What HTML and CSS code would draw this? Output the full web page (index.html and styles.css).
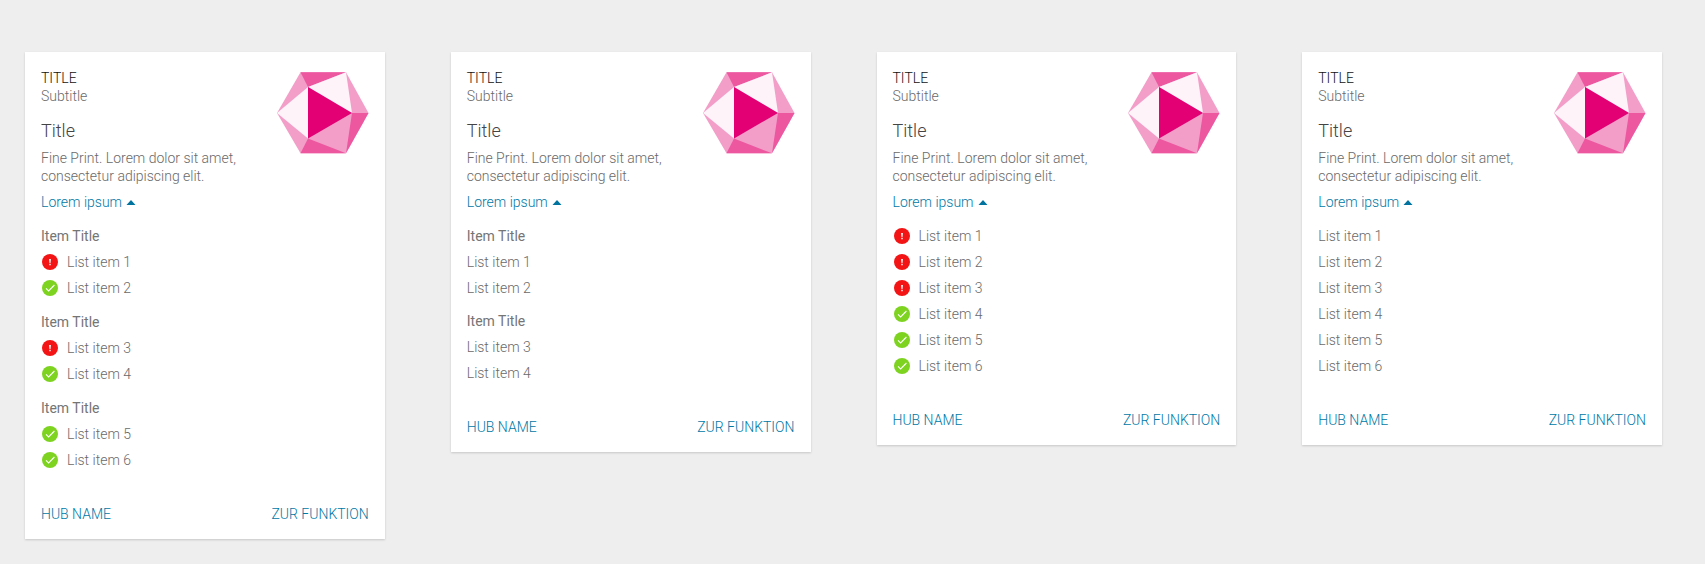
FILE: index.html
```html
<!DOCTYPE html>
<html lang="de">
<head>
<meta charset="utf-8">
<title>Cards</title>
<link rel="stylesheet" href="styles.css">
</head>
<body>
<svg class="sprite" aria-hidden="true">
  <symbol id="gem" viewBox="0 0 92 82">
    <polygon fill="#f29ec8" points="0,41 23.5,0.3 69,0.3 91.5,41 69,81.3 23.5,81.3"/>
    <polygon fill="#ec57a0" points="23.5,0.3 69,0.3 31,15"/>
    <polygon fill="#fef3f9" points="69,0.3 75,41 31,15"/>
    <polygon fill="#fef3f9" points="0,41 31,15 31,66.5"/>
    <polygon fill="#ec57a0" points="75,41 91.5,41 69,81.3"/>
    <polygon fill="#ec57a0" points="31,66.5 69,81.3 23.5,81.3"/>
    <polygon fill="#e20074" points="31,15 75,41 31,66.5"/>
  </symbol>
  <symbol id="alert" viewBox="0 0 16 16">
    <circle cx="8" cy="8" r="8" fill="#f31515"/>
    <path fill="#fff" d="M7.1 5h1.8l-.4 4h-1zM7.3 9.8h1.4v1.4H7.3z"/>
  </symbol>
  <symbol id="check" viewBox="0 0 16 16">
    <circle cx="8" cy="8" r="8" fill="#7ed321"/>
    <path fill="none" stroke="#fff" stroke-width="1.1" d="M4 8.4l2.6 2.5L12.4 5"/>
  </symbol>
</svg>
<main class="cards">
  <article class="card">
    <header class="card-head">
      <div class="card-intro">
        <h2 class="overline">TITLE</h2>
        <p class="subtitle">Subtitle</p>
        <h3 class="headline">Title</h3>
        <p class="fine-print">Fine Print. Lorem dolor sit amet, consectetur adipiscing elit.</p>
        <button class="toggle" type="button" aria-expanded="true">Lorem ipsum<svg class="caret" viewBox="0 0 10 5" aria-hidden="true"><path d="M.5 5L5 0l4.500 5z"/></svg></button>
      </div>
      <svg class="gem" aria-hidden="true"><use href="#gem"/></svg>
    </header>
    <div class="groups">
      <section class="group">
        <h4 class="group-title">Item Title</h4>
        <ul class="list">
          <li class="item"><svg class="status" role="img" aria-label="Fehler"><use href="#alert"/></svg>List item 1</li>
          <li class="item"><svg class="status" role="img" aria-label="OK"><use href="#check"/></svg>List item 2</li>
        </ul>
      </section>
      <section class="group">
        <h4 class="group-title">Item Title</h4>
        <ul class="list">
          <li class="item"><svg class="status" role="img" aria-label="Fehler"><use href="#alert"/></svg>List item 3</li>
          <li class="item"><svg class="status" role="img" aria-label="OK"><use href="#check"/></svg>List item 4</li>
        </ul>
      </section>
      <section class="group">
        <h4 class="group-title">Item Title</h4>
        <ul class="list">
          <li class="item"><svg class="status" role="img" aria-label="OK"><use href="#check"/></svg>List item 5</li>
          <li class="item"><svg class="status" role="img" aria-label="OK"><use href="#check"/></svg>List item 6</li>
        </ul>
      </section>
    </div>
    <footer class="card-foot"><a class="link" href="#hub">HUB NAME</a><a class="link" href="#funktion">ZUR FUNKTION</a></footer>
  </article>

  <article class="card">
    <header class="card-head">
      <div class="card-intro">
        <h2 class="overline">TITLE</h2>
        <p class="subtitle">Subtitle</p>
        <h3 class="headline">Title</h3>
        <p class="fine-print">Fine Print. Lorem dolor sit amet, consectetur adipiscing elit.</p>
        <button class="toggle" type="button" aria-expanded="true">Lorem ipsum<svg class="caret" viewBox="0 0 10 5" aria-hidden="true"><path d="M.5 5L5 0l4.500 5z"/></svg></button>
      </div>
      <svg class="gem" aria-hidden="true"><use href="#gem"/></svg>
    </header>
    <div class="groups groups-plain">
      <section class="group">
        <h4 class="group-title">Item Title</h4>
        <ul class="list">
          <li class="item">List item 1</li>
          <li class="item">List item 2</li>
        </ul>
      </section>
      <section class="group">
        <h4 class="group-title">Item Title</h4>
        <ul class="list">
          <li class="item">List item 3</li>
          <li class="item">List item 4</li>
        </ul>
      </section>
    </div>
    <footer class="card-foot"><a class="link" href="#hub">HUB NAME</a><a class="link" href="#funktion">ZUR FUNKTION</a></footer>
  </article>

  <article class="card">
    <header class="card-head">
      <div class="card-intro">
        <h2 class="overline">TITLE</h2>
        <p class="subtitle">Subtitle</p>
        <h3 class="headline">Title</h3>
        <p class="fine-print">Fine Print. Lorem dolor sit amet, consectetur adipiscing elit.</p>
        <button class="toggle" type="button" aria-expanded="true">Lorem ipsum<svg class="caret" viewBox="0 0 10 5" aria-hidden="true"><path d="M.5 5L5 0l4.500 5z"/></svg></button>
      </div>
      <svg class="gem" aria-hidden="true"><use href="#gem"/></svg>
    </header>
    <ul class="list">
      <li class="item"><svg class="status" role="img" aria-label="Fehler"><use href="#alert"/></svg>List item 1</li>
      <li class="item"><svg class="status" role="img" aria-label="Fehler"><use href="#alert"/></svg>List item 2</li>
      <li class="item"><svg class="status" role="img" aria-label="Fehler"><use href="#alert"/></svg>List item 3</li>
      <li class="item"><svg class="status" role="img" aria-label="OK"><use href="#check"/></svg>List item 4</li>
      <li class="item"><svg class="status" role="img" aria-label="OK"><use href="#check"/></svg>List item 5</li>
      <li class="item"><svg class="status" role="img" aria-label="OK"><use href="#check"/></svg>List item 6</li>
    </ul>
    <footer class="card-foot"><a class="link" href="#hub">HUB NAME</a><a class="link" href="#funktion">ZUR FUNKTION</a></footer>
  </article>

  <article class="card">
    <header class="card-head">
      <div class="card-intro">
        <h2 class="overline">TITLE</h2>
        <p class="subtitle">Subtitle</p>
        <h3 class="headline">Title</h3>
        <p class="fine-print">Fine Print. Lorem dolor sit amet, consectetur adipiscing elit.</p>
        <button class="toggle" type="button" aria-expanded="true">Lorem ipsum<svg class="caret" viewBox="0 0 10 5" aria-hidden="true"><path d="M.5 5L5 0l4.500 5z"/></svg></button>
      </div>
      <svg class="gem" aria-hidden="true"><use href="#gem"/></svg>
    </header>
    <ul class="list">
      <li class="item">List item 1</li>
      <li class="item">List item 2</li>
      <li class="item">List item 3</li>
      <li class="item">List item 4</li>
      <li class="item">List item 5</li>
      <li class="item">List item 6</li>
    </ul>
    <footer class="card-foot"><a class="link" href="#hub">HUB NAME</a><a class="link" href="#funktion">ZUR FUNKTION</a></footer>
  </article>
</main>
</body>
</html>
```
FILE: styles.css
```css
* {
  box-sizing: border-box;
  margin: 0;
  padding: 0;
}

body {
  background: #eeeeee;
  color: #6a6a6a;
  font: 300 14px/18px Roboto, "Liberation Sans", sans-serif;
}

.sprite {
  display: none;
}

.cards {
  display: grid;
  grid-template-columns: repeat(4, minmax(0, 1fr));
  align-items: start;
  gap: 66px;
  padding: 52px 43px 25px 25px;
}

.card {
  padding: 17px 16px 16px;
  background: #fff;
  box-shadow: 0 1px 2px rgba(0, 0, 0, 0.16);
}

.card-head {
  display: flex;
  align-items: flex-start;
  gap: 24px;
  margin-bottom: 16px;
}

.card-intro {
  flex: 1;
  min-width: 0;
}

.overline {
  color: #111;
  font-size: 14px;
  font-weight: 300;
}

.headline {
  margin: 14px 0 6px;
  color: #444;
  font-size: 18px;
  font-weight: 300;
  line-height: 24px;
}

.toggle {
  display: flex;
  align-items: center;
  gap: 4px;
  margin-top: 8px;
  border: 0;
  background: none;
  color: #0078a5;
  font: inherit;
  cursor: pointer;
}

.caret {
  width: 10px;
  height: 5px;
  fill: #00739f;
}

.gem {
  flex: none;
  width: 92px;
  height: 82px;
  margin-top: 3px;
}

.groups {
  display: grid;
  gap: 16px;
}

.groups-plain {
  gap: 15px;
}

.group-title {
  margin-bottom: 8px;
  color: #757575;
  font-size: 14px;
  font-weight: 400;
}

.list {
  display: grid;
  gap: 8px;
  list-style: none;
}

.item {
  display: flex;
  align-items: center;
  gap: 9px;
}

.status {
  width: 16px;
  height: 16px;
  margin-left: 1px;
}

.card-foot {
  display: flex;
  justify-content: space-between;
  margin-top: 36px;
}

.link {
  color: #0078a5;
  text-decoration: none;
}
```
